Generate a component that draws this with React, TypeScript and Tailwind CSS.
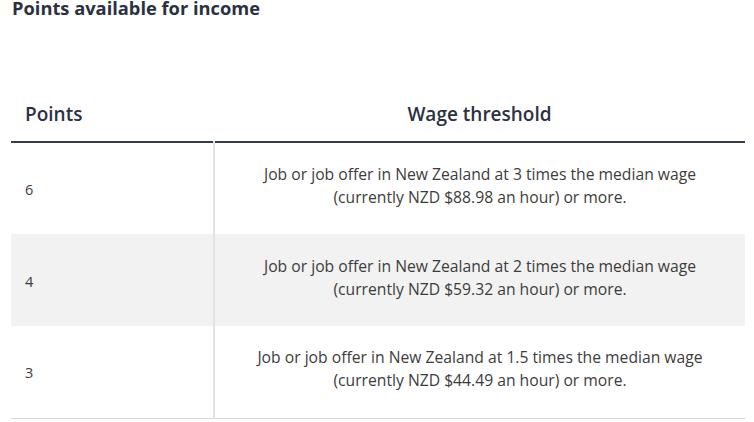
import React from "react";

const rows = [
  { p: "6", times: "3", wage: "$88.98" },
  { p: "4", times: "2", wage: "$59.32" },
  { p: "3", times: "1.5", wage: "$44.49" },
];

export default function App() {
  return (
    <div
      className="w-[754px] h-[422px] overflow-hidden bg-white"
      style={{ fontFamily: '"Open Sans", "Noto Sans", sans-serif' }}
    >
      <h2 className="ml-[12px] -mt-[4px] text-[18.3px] leading-[24px] font-bold text-[#2b3141]">
        Points available for income
      </h2>
      <table className="ml-[11px] mt-[68px] w-[734px] border-collapse table-fixed">
        <thead>
          <tr className="h-[54px] border-b-2 border-[#363b48]">
            <th className="w-[203px] pl-[14px] text-left text-[19px] font-semibold text-[#2b3141]">
              Points
            </th>
            <th className="text-center text-[19px] font-semibold text-[#2b3141]">
              Wage threshold
            </th>
          </tr>
        </thead>
        <tbody>
          {rows.map((r, i) => (
            <tr
              key={r.p}
              className={
                (i === 1 ? "bg-[#f2f2f2] " : "bg-white ") +
                (i === 2 ? "h-[92px] border-b border-[#d6d6d6]" : "h-[92px]")
              }
            >
              <td className="pl-[14px] pt-[3px] text-[14.5px] text-[#3c3c3c] border-r-2 border-[#e2e2e2] align-middle">
                {r.p}
              </td>
              <td className="pb-[5px] text-center text-[15.7px] leading-[23px] text-[#3c3c3c] align-middle">
                Job or job offer in New Zealand at {r.times} times the median wage
                <br />
                (currently NZD {r.wage} an hour) or more.
              </td>
            </tr>
          ))}
        </tbody>
      </table>
    </div>
  );
}
